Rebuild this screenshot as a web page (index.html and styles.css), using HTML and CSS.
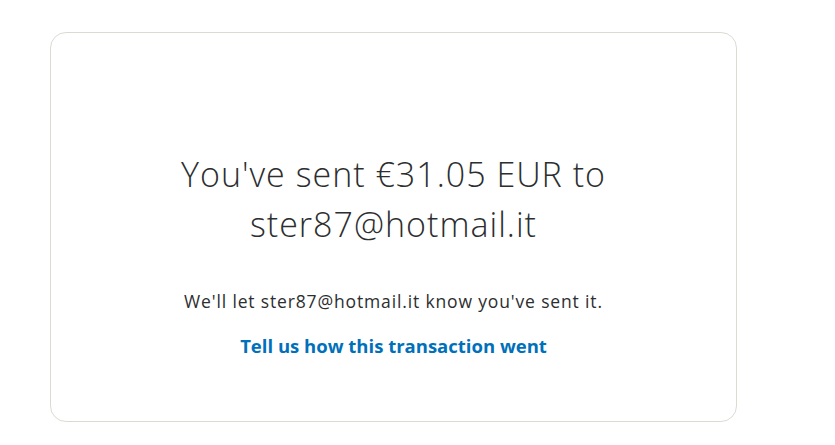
FILE: index.html
```html
<!DOCTYPE html>
<html lang="en">
<head>
<meta charset="utf-8">
<title>Sent</title>
<link rel="stylesheet" href="styles.css">
</head>
<body>
<main class="page">
  <section class="card">
    <h1 class="title">You've sent €31.05 EUR to ster87@hotmail.it</h1>
    <p class="note">We'll let ster87@hotmail.it know you've sent it.</p>
    <a class="feedback" href="#">Tell us how this transaction went</a>
  </section>
</main>
</body>
</html>
```
FILE: styles.css
```css
html, body {
  margin: 0;
  padding: 0;
  background: #ffffff;
}
.page {
  padding: 32px 0 0 50px;
}
.card {
  box-sizing: border-box;
  width: 687px;
  height: 390px;
  border: 1px solid #dcdbd2;
  border-radius: 16px;
  display: flex;
  flex-direction: column;
  align-items: center;
  padding-top: 116px;
  color: #2c2e2f;
}
.title {
  margin: 0;
  width: 480px;
  text-align: center;
  font-family: "Open Sans", sans-serif;
  font-weight: 300;
  font-size: 34px;
  letter-spacing: 1px;
  line-height: 50px;
}
.note {
  margin: 40px 0 0;
  font-family: "Open Sans", sans-serif;
  font-size: 17.5px;
  letter-spacing: 0.85px;
  line-height: 24px;
}
.feedback {
  margin-top: 21px;
  font-family: "Open Sans", sans-serif;
  font-weight: 700;
  font-size: 18.5px;
  line-height: 24px;
  color: #0070ba;
  text-decoration: none;
}
```
